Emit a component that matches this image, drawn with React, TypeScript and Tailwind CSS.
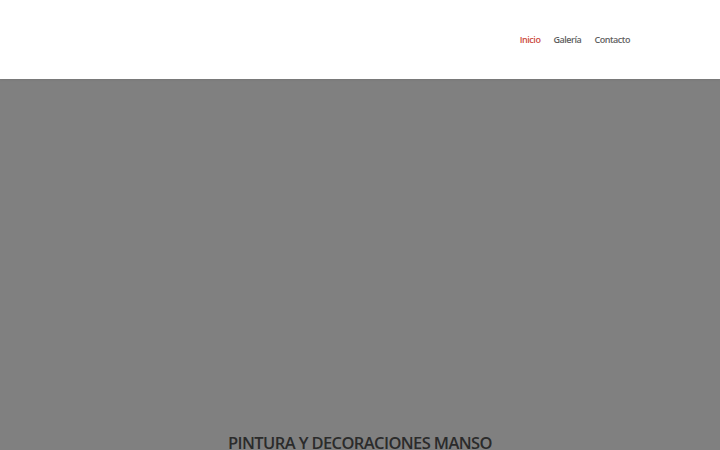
export default function App() {
  return (
    <div className="min-h-screen bg-[#808080] font-['Open_Sans',sans-serif]">
      <header className="h-[79px] bg-white shadow-[0_1px_2px_rgba(0,0,0,0.08)] flex items-center justify-end pr-[90px]">
        <nav className="flex gap-[13px] text-[9px] tracking-[-0.45px] font-semibold text-[#5f5f5f] mt-[1px]">
          <a className="text-[#cc4a40]">Inicio</a>
          <a>Galería</a>
          <a>Contacto</a>
        </nav>
      </header>
      <section className="h-[371px] flex flex-col justify-end items-center">
        <h1 className="text-[16.5px] tracking-[-0.6px] font-semibold text-[#2b2b2b] leading-none -mb-[1px]">
          PINTURA Y DECORACIONES MANSO
        </h1>
      </section>
    </div>
  );
}
